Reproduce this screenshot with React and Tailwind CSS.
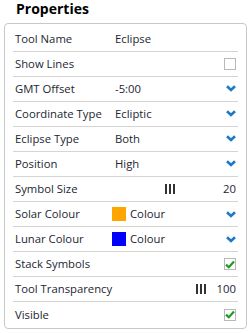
import React from "react";

const Chevron = () => (
  <svg width="10" height="7" viewBox="0 0 10 7" className="block">
    <path d="M1 1.2 L5 5 L9 1.2" fill="none" stroke="#1f78c8" strokeWidth="2.6" strokeLinecap="butt" strokeLinejoin="miter" />
  </svg>
);

const Check = ({ checked }) => (
  <div className="w-[12px] h-[12px] border border-[#b8b8b8] bg-white flex items-center justify-center">
    {checked && (
      <svg width="10" height="9" viewBox="0 0 10 9" className="block">
        <path d="M1 4.6 L3.8 7.2 L9 1.6" fill="none" stroke="#1e9a1e" strokeWidth="2.2" />
      </svg>
    )}
  </div>
);

const Bars = () => (
  <div className="flex gap-[2px] h-[10px]">
    <div className="w-[2px] h-full bg-[#333]" />
    <div className="w-[2px] h-full bg-[#333]" />
    <div className="w-[2px] h-full bg-[#333]" />
  </div>
);

const Row = ({ label, children, last }) => (
  <div className={`flex items-center h-[25px] pl-[2px] pr-[2px] whitespace-nowrap ${last ? "" : "border-b border-[#d4d4d4]"}`}>
    <div className="w-[100px] shrink-0">{label}</div>
    <div className="flex-1 flex items-center">{children}</div>
  </div>
);

export default function App() {
  return (
    <div className="w-[251px] h-[333px] bg-white text-[#222631] text-[11.3px] leading-none" style={{ fontFamily: '"Open Sans", sans-serif' }}>
      <div className="pl-[16px] h-[23px] text-[14px] leading-[18px] font-bold text-black">Properties</div>
      <div className="mx-[4px] border border-[#c8c8c8] rounded-[4px] px-[8px] pt-[3px] pb-[2px] h-[306px]">
        <Row label="Tool Name"><span>Eclipse</span></Row>
        <Row label="Show Lines"><span className="flex-1" /><Check /></Row>
        <Row label="GMT Offset"><span className="flex-1">-5:00</span><Chevron /></Row>
        <Row label="Coordinate Type"><span className="flex-1">Ecliptic</span><Chevron /></Row>
        <Row label="Eclipse Type"><span className="flex-1">Both</span><Chevron /></Row>
        <Row label="Position"><span className="flex-1">High</span><Chevron /></Row>
        <Row label="Symbol Size"><span className="flex-1" /><div className="mr-[48px]"><Bars /></div><span>20</span></Row>
        <Row label="Solar Colour">
          <div className="w-[14px] h-[14px] bg-[#ffa500] -ml-[3px] mr-[4px]" />
          <span className="flex-1">Colour</span><Chevron />
        </Row>
        <Row label="Lunar Colour">
          <div className="w-[14px] h-[14px] bg-[#0000ff] -ml-[3px] mr-[4px]" />
          <span className="flex-1">Colour</span><Chevron />
        </Row>
        <Row label="Stack Symbols"><span className="flex-1" /><Check checked /></Row>
        <Row label="Tool Transparency"><span className="flex-1" /><div className="mr-[11px]"><Bars /></div><span>100</span></Row>
        <Row label="Visible" last><span className="flex-1" /><Check checked /></Row>
      </div>
    </div>
  );
}
